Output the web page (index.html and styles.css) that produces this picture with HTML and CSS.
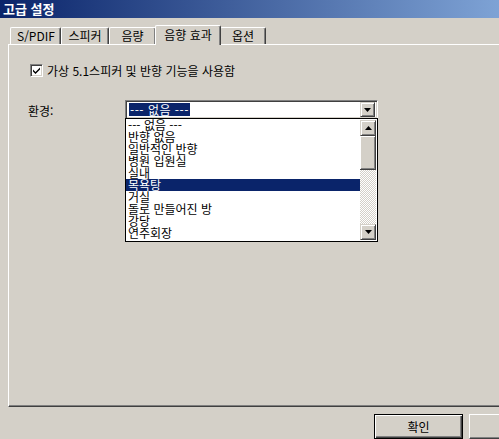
FILE: index.html
```html
<!DOCTYPE html>
<html lang="ko">
<head>
    <meta charset="UTF-8">
    <title>고급 설정</title>
    <link rel="stylesheet" href="styles.css">
</head>
<body>
    <div class="window">
        <div class="titlebar">고급 설정</div>

        <div class="tabs">
            <div class="tab tab-first">S/PDIF</div>
            <div class="tab">스피커</div>
            <div class="tab">음량</div>
            <div class="tab tab-active">음향 효과</div>
            <div class="tab">옵션</div>
        </div>

        <div class="panel">
            <label class="check-row">
                <span class="checkbox">
                    <svg viewBox="0 0 9 9" width="9" height="9">
                        <path d="M1 3.5 L3.5 6 L8 1.5 L8 3.5 L3.5 8 L1 5.5 Z" fill="#000"></path>
                    </svg>
                </span>
                <span>가상 5.1스피커 및 반향 기능을 사용함</span>
            </label>

            <div class="env-row">
                <span class="env-label">환경:</span>
                <div class="combo">
                    <div class="combo-field">
                        <span class="combo-value">--- 없음 ---</span>
                    </div>
                    <div class="arrow-btn">
                        <svg viewBox="0 0 7 4" width="7" height="4"><path d="M0 0 H7 L3.5 4 Z" fill="#000"></path></svg>
                    </div>

                    <div class="dropdown">
                        <ul class="options">
                            <li>--- 없음 ---</li>
                            <li>반향 없음</li>
                            <li>일반적인 반향</li>
                            <li>병원 입원실</li>
                            <li>실내</li>
                            <li class="selected">목욕탕</li>
                            <li>거실</li>
                            <li>돌로 만들어진 방</li>
                            <li>강당</li>
                            <li>연주회장</li>
                        </ul>
                        <div class="scrollbar">
                            <div class="arrow-btn scroll-btn">
                                <svg viewBox="0 0 7 4" width="7" height="4"><path d="M0 4 H7 L3.5 0 Z" fill="#000"></path></svg>
                            </div>
                            <div class="thumb"></div>
                            <div class="track"></div>
                            <div class="arrow-btn scroll-btn">
                                <svg viewBox="0 0 7 4" width="7" height="4"><path d="M0 0 H7 L3.5 4 Z" fill="#000"></path></svg>
                            </div>
                        </div>
                    </div>
                </div>
            </div>
        </div>

        <div class="footer">
            <button class="btn btn-default">확인</button>
            <button class="btn"></button>
        </div>
    </div>
</body>
</html>
```

FILE: styles.css
```css
:root {
    --face: #d4d0c8;
    --shadow: #808080;
    --dark: #404040;
    --light: #ffffff;
    --select: #0a246a;
    --font-main: "Noto Sans CJK KR", "DejaVu Sans", sans-serif;
}

* {
    margin: 0;
    padding: 0;
    box-sizing: border-box;
}

body {
    width: 499px;
    height: 439px;
    overflow: hidden;
    background: var(--face);
    font-family: var(--font-main);
    font-size: 12px;
    color: #000;
}

.window {
    width: 560px;
    height: 439px;
    background: var(--face);
    display: flex;
    flex-direction: column;
}

.titlebar {
    height: 18px;
    background: linear-gradient(to right, #0a246a, #8cb2e2);
    color: #fff;
    font-weight: bold;
    font-size: 13px;
    line-height: 17px;
    padding-left: 3px;
}

/* tab strip */
.tabs {
    display: flex;
    align-items: flex-end;
    height: 25px;
    padding-left: 10px;
    margin-top: 1px;
}

.tab {
    height: 17px;
    padding: 0 6px;
    line-height: 15px;
    border-top: 1px solid var(--light);
    border-left: 1px solid var(--light);
    border-right: 1px solid var(--dark);
    box-shadow: inset -1px 0 0 var(--shadow);
    border-radius: 2px 2px 0 0;
    text-align: center;
}

.tab-first { width: 51px; }
.tab:nth-child(2) { width: 48px; }
.tab:nth-child(3) { width: 47px; }
.tab:nth-child(5) { width: 46px; }

.tab-active {
    width: 66px;
    height: 20px;
    margin-bottom: -1px;
    margin-left: -1px;
    margin-right: -1px;
    background: var(--face);
    position: relative;
    z-index: 1;
    line-height: 17px;
}

.panel {
    margin-left: 8px;
    height: 363px;
    border-top: 1px solid var(--light);
    border-left: 1px solid var(--light);
    border-bottom: 1px solid var(--dark);
    box-shadow: inset 0 -1px 0 var(--shadow);
    padding: 19px 0 0 21px;
    display: flex;
    flex-direction: column;
}

.check-row {
    display: flex;
    align-items: center;
    gap: 4px;
    height: 13px;
}

.checkbox {
    width: 13px;
    height: 13px;
    background: #fff;
    border-top: 1px solid var(--shadow);
    border-left: 1px solid var(--shadow);
    border-right: 1px solid var(--light);
    border-bottom: 1px solid var(--light);
    box-shadow: inset 1px 1px 0 var(--dark), inset -1px -1px 0 var(--face);
    display: flex;
    align-items: center;
    justify-content: center;
}

.env-row {
    display: flex;
    align-items: center;
    margin-top: 23px;
    margin-left: -2px;
}

.env-label {
    width: 97px;
    margin-top: 1px;
}

.combo {
    position: relative;
    width: 253px;
    height: 19px;
    background: #fff;
    border-top: 1px solid var(--shadow);
    border-left: 1px solid var(--shadow);
    border-right: 1px solid var(--light);
    border-bottom: 1px solid var(--light);
    box-shadow: inset 1px 1px 0 var(--dark), inset -1px -1px 0 var(--face);
    display: flex;
    align-items: center;
    padding: 2px 2px 2px 3px;
}

.combo-field {
    flex: 1;
    display: flex;
    align-items: center;
}

.combo-value {
    background: var(--select);
    color: #fff;
    line-height: 13px;
    padding: 0 1px;
    letter-spacing: 0.5px;
}

.arrow-btn {
    width: 15px;
    height: 15px;
    background: var(--face);
    border-top: 1px solid var(--face);
    border-left: 1px solid var(--face);
    border-right: 1px solid var(--dark);
    border-bottom: 1px solid var(--dark);
    box-shadow: inset 1px 1px 0 var(--light), inset -1px -1px 0 var(--shadow);
    display: flex;
    align-items: center;
    justify-content: center;
}

/* open dropdown list lies over the panel */
.dropdown {
    position: absolute;
    top: 17px;
    left: -1px;
    width: 253px;
    height: 124px;
    background: #fff;
    border: 1px solid #000;
    display: flex;
    z-index: 2;
}

.options {
    list-style: none;
    flex: 1;
    font-size: 12px;
}

.options li {
    height: 12px;
    line-height: 12px;
    padding-left: 2px;
    white-space: nowrap;
}

.options .selected {
    background: var(--select);
    color: #fff;
}

.scrollbar {
    width: 16px;
    display: flex;
    flex-direction: column;
    padding: 1px 0;
    margin-right: 1px;
}

.scroll-btn {
    width: 16px;
    height: 16px;
}

.thumb {
    height: 34px;
    background: var(--face);
    border-right: 1px solid var(--dark);
    border-bottom: 1px solid var(--dark);
    box-shadow: inset 1px 1px 0 var(--light), inset -1px -1px 0 var(--shadow);
}

.track {
    flex: 1;
    background-color: #fff;
    background-image: repeating-conic-gradient(var(--face) 0 25%, #fff 0 50%);
    background-size: 2px 2px;
}

.footer {
    display: flex;
    gap: 6px;
    padding-left: 374px;
    margin-top: 7px;
}

.btn {
    width: 89px;
    height: 25px;
    background: var(--face);
    font-family: var(--font-main);
    font-size: 12px;
    border-top: 1px solid var(--light);
    border-left: 1px solid var(--light);
    border-right: 1px solid var(--dark);
    border-bottom: 1px solid var(--dark);
    box-shadow: inset -1px -1px 0 var(--shadow);
}

.btn-default {
    border: 1px solid #000;
    box-shadow: inset 1px 1px 0 var(--light), inset -1px -1px 0 var(--dark), inset -2px -2px 0 var(--shadow);
}
```
